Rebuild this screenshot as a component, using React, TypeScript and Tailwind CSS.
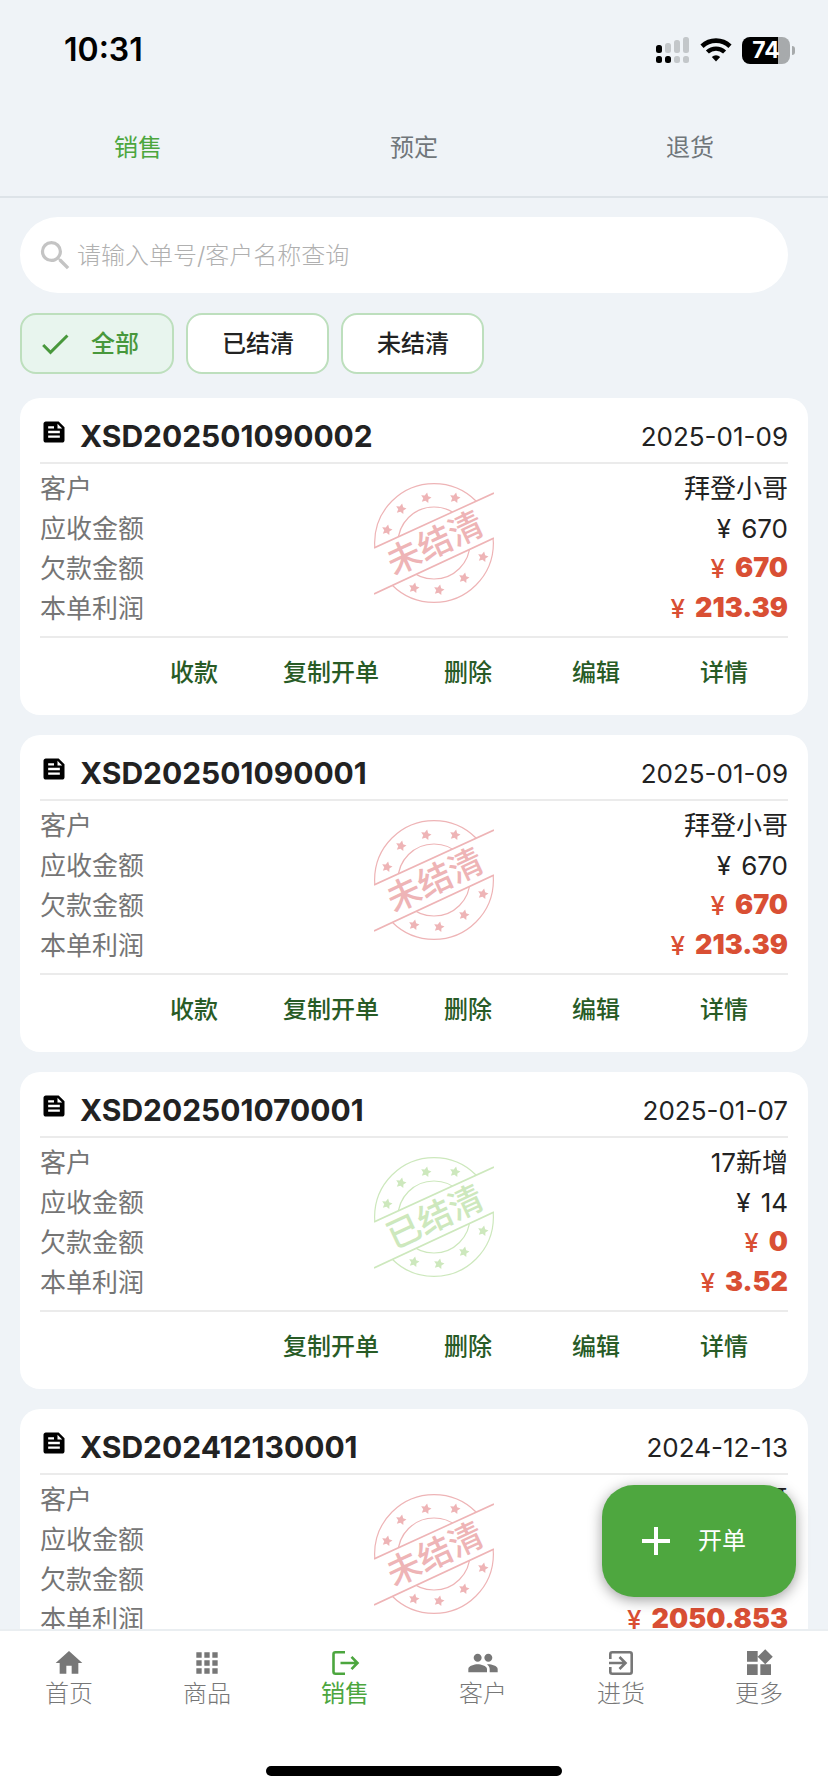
import { useState, type ReactNode } from "react";
import { MdApps, MdCheck, MdFeed, MdHome, MdPeople, MdSearch, MdWidgets } from "react-icons/md";

type Order = {
  id: string;
  date: string;
  customer: string;
  receivable: string;
  debt: string;
  profit: string;
  settled: boolean;
};

const orders: Order[] = [
  { id: "XSD202501090002", date: "2025-01-09", customer: "拜登小哥", receivable: "670", debt: "670", profit: "213.39", settled: false },
  { id: "XSD202501090001", date: "2025-01-09", customer: "拜登小哥", receivable: "670", debt: "670", profit: "213.39", settled: false },
  { id: "XSD202501070001", date: "2025-01-07", customer: "17新增", receivable: "14", debt: "0", profit: "3.52", settled: true },
  { id: "XSD202412130001", date: "2024-12-13", customer: "拜登小哥", receivable: "6700", debt: "6700", profit: "2050.853", settled: false },
];

function SignalIcon() {
  return (
    <svg className="h-[28px] w-[34px]" viewBox="0 0 34 28" aria-hidden="true">
      <g fill="#c3c7ca">
        <rect x="9" y="7" width="6" height="10" rx="2.5" />
        <rect x="18" y="4" width="6" height="13" rx="2.5" />
        <rect x="27" y="1" width="6" height="16" rx="2.5" />
        <rect x="18" y="20" width="6" height="7" rx="2.5" />
        <rect x="27" y="20" width="6" height="7" rx="2.5" />
      </g>
      <rect x="0" y="9" width="6" height="8" rx="2.5" />
      <rect x="0" y="20" width="6" height="7" rx="2.5" />
      <rect x="9" y="20" width="6" height="7" rx="2.5" />
    </svg>
  );
}

function WifiIcon() {
  return (
    <svg className="h-[24px] w-[32px]" viewBox="0 0 32 24" fill="none" aria-hidden="true">
      <path d="M2 8.2a20.5 20.5 0 0 1 28 0" stroke="#000" strokeWidth="4.6" />
      <path d="M7.4 14a12.6 12.6 0 0 1 17.2 0" stroke="#000" strokeWidth="4.4" />
      <path d="M11.8 18.9a6.3 6.3 0 0 1 8.4 0L16 23.4z" fill="#000" />
    </svg>
  );
}

function Battery() {
  return (
    <div className="flex items-center gap-[2px]">
      <div className="flex h-[27px] w-[48px] items-center justify-center rounded-[8px] bg-linear-to-r from-black from-75% to-[#a7aaac] to-75% text-[23px] font-bold text-white">
        74
      </div>
      <span className="h-[9px] w-[3px] rounded-r-full bg-[#a7aaac]" />
    </div>
  );
}

const starCenters = [
  [13, 47], [27, 26], [52, 15], [81, 15], [109, 74], [90, 95], [65, 107], [40, 105],
];

function Stamp({ settled, id }: { settled: boolean; id: string }) {
  const color = settled ? "#cde8bd" : "#eeb4b6";
  return (
    <svg className="size-[120px]" viewBox="0 0 120 120" role="img" aria-label={settled ? "已结清" : "未结清"}>
      <clipPath id={`band-${id}`}>
        <path d="M0 0H120V10L0 65ZM0 120V111L120 55V120Z" />
      </clipPath>
      <g clipPath={`url(#band-${id})`} stroke={color} fill="none">
        <circle cx="60" cy="60" r="59.4" strokeWidth="1.2" />
        <circle cx="60" cy="60" r="36" strokeWidth="1.2" />
      </g>
      <path d="M0 65L120 10M0 111L120 55" stroke={color} strokeWidth="1.6" />
      {starCenters.map(([x, y]) => (
        <path
          key={`${x}-${y}`}
          transform={`translate(${x} ${y}) rotate(12) scale(1.1)`}
          d="M0-5L1.6-1.9L4.8-1.5L2.4.8L3 4.1L0 2.5L-3 4.1L-2.4.8L-4.8-1.5L-1.6-1.9Z"
          fill={color}
        />
      ))}
      <text x="61" y="72" textAnchor="middle" transform="rotate(-25 61 60)" className="text-[34px] font-medium" fill={color}>
        {settled ? "已结清" : "未结清"}
      </text>
    </svg>
  );
}

function Money({ value, strong }: { value: string; strong?: boolean }) {
  return strong ? (
    <dd className="flex items-center gap-[10px] text-[#d94f34]">
      <span className="font-medium">¥</span>
      <span className="text-[27px] font-black">{value}</span>
    </dd>
  ) : (
    <dd className="flex items-center gap-[10px]">
      <span>¥</span>
      <span>{value}</span>
    </dd>
  );
}

function Row({ label, children }: { label: string; children: ReactNode }) {
  return (
    <div className="flex h-10 items-center justify-between">
      <dt className="text-[#757575]">{label}</dt>
      {children}
    </div>
  );
}

function OrderCard({ order }: { order: Order }) {
  const actions = ["复制开单", "删除", "编辑", "详情"];
  if (!order.settled) actions.unshift("收款");
  return (
    <article className="shrink-0 rounded-[20px] bg-white px-5 pb-[7px] text-[#222]">
      <header className="flex h-[66px] items-center gap-3 border-b-2 border-[#ebebeb] pt-3">
        <MdFeed className="mb-2 size-7 text-black" />
        <h2 className="flex-1 text-[30px] font-bold">{order.id}</h2>
        <time className="text-[26px]">{order.date}</time>
      </header>
      <div className="relative border-b-2 border-[#ebebeb] pt-1 pb-2">
        <dl className="text-[26px]">
          <Row label="客户"><dd>{order.customer}</dd></Row>
          <Row label="应收金额"><Money value={order.receivable} /></Row>
          <Row label="欠款金额"><Money value={order.debt} strong /></Row>
          <Row label="本单利润"><Money value={order.profit} strong /></Row>
        </dl>
        <div className="pointer-events-none absolute inset-x-0 top-0 flex justify-center pt-[19px] pl-10">
          <Stamp settled={order.settled} id={order.id} />
        </div>
      </div>
      <div className="flex h-[70px] justify-end text-[24px] font-medium text-[#285b26]">
        {actions.map((a) => (
          <button key={a} type="button" className="min-w-32 px-[25px]">{a}</button>
        ))}
      </div>
    </article>
  );
}

function ExportIcon() {
  return (
    <svg className="size-[30px]" viewBox="0 0 30 30" fill="none" stroke="currentColor" strokeWidth="2.6" aria-hidden="true">
      <path d="M15 4.2H5.5a2 2 0 0 0-2 2V23.8a2 2 0 0 0 2 2H15M10.500 15H27M21.5 8.8L27.5 15L21.5 21.2" />
    </svg>
  );
}

function ImportIcon() {
  return (
    <svg className="size-[30px]" viewBox="0 0 30 30" fill="none" stroke="currentColor" strokeWidth="2.6" aria-hidden="true">
      <path d="M4.3 11V6.2a2 2 0 0 1 2-2H23.7a2 2 0 0 1 2 2V23.8a2 2 0 0 1-2 2H6.3a2 2 0 0 1-2-2V19M3 15H18.5M13.5 9L19.5 15L13.5 21" />
    </svg>
  );
}

const navItems = [
  { label: "首页", icon: <MdHome className="size-8" /> },
  { label: "商品", icon: <MdApps className="size-8" /> },
  { label: "销售", icon: <ExportIcon /> },
  { label: "客户", icon: <MdPeople className="size-8" /> },
  { label: "进货", icon: <ImportIcon /> },
  { label: "更多", icon: <MdWidgets className="size-8" /> },
];

const tabs = ["销售", "预定", "退货"];
const filters = ["全部", "已结清", "未结清"];

export default function App() {
  const [tab, setTab] = useState("销售");
  const [filter, setFilter] = useState("全部");
  const shown = orders.filter((o) => filter === "全部" || o.settled === (filter === "已结清"));

  return (
    <div className="flex h-screen flex-col bg-[#eff3f7] font-['Inter','Noto_Sans_CJK_SC',sans-serif]">
      <div className="flex h-[100px] shrink-0 items-center justify-between pr-[33px] pl-16">
        <span className="text-[32px] font-semibold text-black">10:31</span>
        <div className="flex items-center gap-[10px]">
          <SignalIcon />
          <WifiIcon />
          <Battery />
        </div>
      </div>

      <div role="tablist" className="grid h-[98px] shrink-0 grid-cols-3 border-b-2 border-[#dde3e8] text-[24px]">
        {tabs.map((t) => (
          <button
            key={t}
            type="button"
            role="tab"
            aria-selected={t === tab}
            onClick={() => setTab(t)}
            className={t === tab ? "text-[#4ca63e]" : "text-[#70767a]"}
          >
            {t}
          </button>
        ))}
      </div>

      <div className="relative flex min-h-0 flex-1 flex-col overflow-hidden">
        <div className="shrink-0 pt-[19px] pr-10 pl-5">
          <label className="flex h-[76px] items-center gap-[2px] rounded-full bg-white pl-4">
            <MdSearch className="size-[39px] text-[#c4c4c4]" />
            <input
              type="text"
              aria-label="查询"
              placeholder="请输入单号/客户名称查询"
              className="min-w-0 flex-1 bg-transparent pt-[2px] text-[24px] font-light outline-none placeholder:text-[#b0b0b0]"
            />
          </label>
        </div>

        <div className="flex shrink-0 gap-3 px-5 pt-5 pb-6 text-[24px] font-medium">
          {filters.map((f) => {
            const active = f === filter;
            return (
              <button
                key={f}
                type="button"
                aria-pressed={active}
                onClick={() => setFilter(f)}
                className={`flex h-[61px] items-center gap-[18px] rounded-[16px] border-2 border-[#bddfbd] pr-[33px] ${
                  active ? "bg-[#e8f5ee] pl-[15px] text-[#48983c]" : "bg-white pl-[34px] text-[#222]"
                }`}
              >
                {active && <MdCheck className="size-9" />}
                {f}
              </button>
            );
          })}
        </div>

        <main className="flex min-h-0 flex-1 flex-col gap-5 overflow-y-auto px-5 [scrollbar-width:none]">
          {shown.map((o) => (
            <OrderCard key={o.id} order={o} />
          ))}
        </main>

        <button
          type="button"
          className="absolute right-8 bottom-8 flex h-28 items-center gap-[26px] rounded-[32px] bg-[#4ea73f] pr-[50px] pl-[38px] text-[24px] text-white shadow-[0_3px_14px_rgba(0,0,0,0.38)]"
        >
          <svg className="size-8" viewBox="0 0 32 32" stroke="currentColor" strokeWidth="4" aria-hidden="true">
            <path d="M2 16H30M16 2V30" />
          </svg>
          开单
        </button>
      </div>

      <footer className="shrink-0 border-t-2 border-[#eaeef1] bg-white pb-4">
        <nav className="grid h-[135px] grid-cols-6 text-[24px]">
          {navItems.map(({ label, icon }) => (
            <a
              key={label}
              href="#"
              className={`flex flex-col items-center pt-4 leading-[30px] ${label === "销售" ? "text-[#4ca63e]" : "font-light text-[#777]"}`}
            >
              <span className="flex h-8 items-center">{icon}</span>
              {label}
            </a>
          ))}
        </nav>
        <div className="mx-auto h-[10px] w-[296px] rounded-full bg-black" />
      </footer>
    </div>
  );
}
